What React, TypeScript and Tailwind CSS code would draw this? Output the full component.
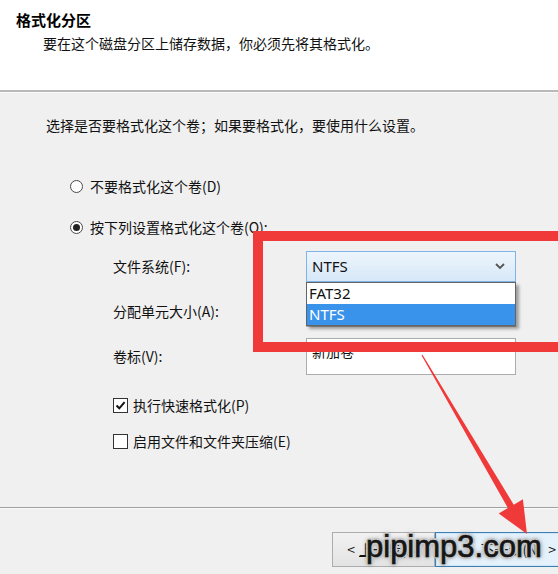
import React from "react";

// 格式化分区 向导页（带红框标注和水印）
const cjk = "font-['Microsoft_YaHei','Noto_Sans_CJK_SC',sans-serif]";
const ui = "font-['Segoe_UI','Noto_Sans','Open_Sans',sans-serif]";

const Radio = ({ checked, label }: { checked?: boolean; label: string }) => (
  <div className="flex h-[20px] items-center gap-[7px] pl-[70px]">
    <span className="flex h-[13px] w-[13px] items-center justify-center rounded-full border border-[#4a4a4a] bg-white">
      {checked && <span className="h-[7px] w-[7px] rounded-full bg-[#222]" />}
    </span>
    <span>{label}</span>
  </div>
);

const Check = ({ checked, label }: { checked?: boolean; label: string }) => (
  <div className="flex h-[20px] items-center gap-[5px] pl-[113px]">
    <span className="flex h-[15px] w-[15px] items-center justify-center border border-[#333] bg-white">
      {checked && (
        <svg width="11" height="11" viewBox="0 0 11 11">
          <path d="M1.5 5.5 L4.3 8.3 L9.6 2.2" fill="none" stroke="#111" strokeWidth="2" />
        </svg>
      )}
    </span>
    <span>{label}</span>
  </div>
);

export default function App() {
  // 箭头：从卷标框指向“下一步”按钮
  const start = { x: 422, y: 355 };
  const tip = { x: 527, y: 534 };
  const dx = tip.x - start.x;
  const dy = tip.y - start.y;
  const len = Math.hypot(dx, dy);
  const ux = dx / len;
  const uy = dy / len;
  const px = -uy;
  const py = ux;
  const base = { x: tip.x - 32 * ux, y: tip.y - 32 * uy };
  const shaft = [
    [start.x + 0.6 * px, start.y + 0.6 * py],
    [base.x + 3.4 * px, base.y + 3.4 * py],
    [base.x + 14 * px, base.y + 14 * py],
    [tip.x, tip.y],
    [base.x - 14 * px, base.y - 14 * py],
    [base.x - 3.4 * px, base.y - 3.4 * py],
    [start.x - 0.6 * px, start.y - 0.6 * py],
  ]
    .map((p) => p.join(","))
    .join(" ");

  return (
    <div className={`relative h-[574px] w-[558px] overflow-hidden bg-[#f0f0f0] text-[14px] text-[#111] ${cjk}`}>
      {/* 顶部标题区 */}
      <div className="h-[90px] bg-white pl-[16px] pt-[10px]">
        <div className="text-[15px] font-bold leading-[20px] text-black">格式化分区</div>
        <div className="mt-[3px] pl-[27px] text-[14px] leading-[20px]">要在这个磁盘分区上储存数据，你必须先将其格式化。</div>
      </div>
      <div className="h-[2px] bg-[#b9b9b9]" />
      <div className="h-[1px] bg-[#fafafa]" />

      {/* 主体 */}
      <div className="pt-[22px]">
        <div className="pl-[46px] leading-[20px]">选择是否要格式化这个卷；如果要格式化，要使用什么设置。</div>

        <div className="mt-[41px]">
          <Radio label="不要格式化这个卷(D)" />
        </div>
        <div className="mt-[21px]">
          <Radio checked label="按下列设置格式化这个卷(O):" />
        </div>

        <div className="mt-[14px] grid grid-cols-[193px_210px] pl-[113px]">
          <div className="flex h-[31px] items-center">文件系统(F):</div>
          <div className={`flex h-[31px] items-center justify-between border border-[#7eb4ea] bg-gradient-to-b from-[#edf5fc] to-[#d7e8f8] pl-[5px] pr-[10px] text-[15px] ${ui}`}>
            <span>NTFS</span>
            <svg width="10" height="7" viewBox="0 0 10 7">
              <path d="M1 1 L5 5 L9 1" fill="none" stroke="#555" strokeWidth="1.8" />
            </svg>
          </div>

          <div className="mt-[14px] flex h-[31px] items-center">分配单元大小(A):</div>
          <div className="mt-[14px] h-[31px] border border-[#acacac] bg-[#e8e8e8]" />

          <div className="mt-[11px] flex h-[37px] items-center">卷标(V):</div>
          <div className="mt-[11px] flex h-[37px] items-start border border-[#acacac] bg-white pl-[5px] pt-[2px]">新加卷</div>
        </div>

        <div className="mt-[20px]">
          <Check checked label="执行快速格式化(P)" />
        </div>
        <div className="mt-[16px]">
          <Check label="启用文件和文件夹压缩(E)" />
        </div>
      </div>

      {/* 底部按钮 */}
      <div className="absolute left-0 right-0 top-[507px]">
        <div className="h-[1px] bg-[#a0a0a0]" />
        <div className="h-[1px] bg-[#fafafa]" />
        <div className="mt-[23px] flex pl-[332px]">
          <div className="flex h-[35px] w-[103px] shrink-0 items-center justify-center border border-[#acacac] bg-gradient-to-b from-[#f2f2f2] to-[#e3e3e3]">
            &lt; <span className="ml-1 underline">上</span>一步(B)
          </div>
          <div className="flex h-[35px] w-[140px] shrink-0 items-center justify-end border border-[#3c7fb1] bg-[#e5f1fb] pr-[18px] shadow-[inset_0_0_0_1px_#cfe6fa]">
            <span className="mr-[6px]">下一步(N)</span>&gt;
          </div>
        </div>
      </div>

      {/* 下拉列表 */}
      <div className={`absolute left-[306px] top-[282px] w-[210px] border border-[#646464] bg-white text-[15px] shadow-[3px_3px_3px_rgba(0,0,0,0.35)] ${ui}`}>
        <div className="flex h-[21px] items-center pl-[2px] text-[#111]">FAT32</div>
        <div className="flex h-[21px] items-center bg-[#3a93ea] pl-[2px] text-white">NTFS</div>
      </div>

      {/* 红框标注 */}
      <div className="absolute left-[253px] top-[231px] h-[121px] w-[330px] border-[10px] border-[#f03a3a]" />

      {/* 红色箭头 */}
      <svg className="pointer-events-none absolute inset-0" width="558" height="574">
        <polygon points={shaft} fill="#f03a3a" />
      </svg>

      {/* 水印 */}
      <div className="absolute left-[366px] top-[531px] font-['Liberation_Sans',Arial,sans-serif] text-[31px] leading-none text-[#151515] [-webkit-text-stroke:0.7px_#151515] [text-shadow:2px_0_0_#c8c8c8,-2px_0_0_#c8c8c8,0_2px_0_#c8c8c8,0_-2px_0_#c8c8c8,1px_1px_0_#c8c8c8,-1px_-1px_0_#c8c8c8,1px_-1px_0_#c8c8c8,-1px_1px_0_#c8c8c8,0_0_5px_#555]">
        pipimp3.com
      </div>
    </div>
  );
}
